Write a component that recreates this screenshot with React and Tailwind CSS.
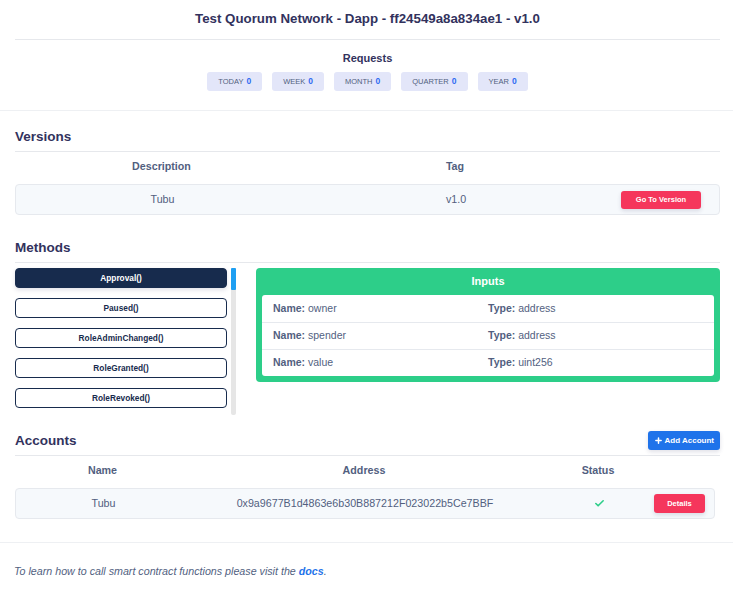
import { Check, Plus } from 'lucide-react';

const badges = ['Today', 'Week', 'Month', 'Quarter', 'Year'];
const methods = ['Approval()', 'Paused()', 'RoleAdminChanged()', 'RoleGranted()', 'RoleRevoked()'];
const inputs = [
  { name: 'owner', type: 'address' },
  { name: 'spender', type: 'address' },
  { name: 'value', type: 'uint256' },
];

function SectionTitle({ children, right }) {
  return (
    <div className="flex items-end justify-between border-b border-[#e6e8ec] pb-[5px]">
      <h2 className="text-[13.5px] font-semibold leading-[18px] text-[#32325d]">{children}</h2>
      {right}
    </div>
  );
}

export default function App() {
  return (
    <div className="min-h-[590px] w-[733px] bg-white font-['Liberation_Sans',Arial,sans-serif] text-[#525f7f]">
      {/* header */}
      <div className="pl-[15px] pr-[13px] pt-[10px]">
        <h1 className="text-center text-[13.3px] font-bold leading-[17px] text-[#32325d]">
          Test Quorum Network - Dapp - ff24549a8a834ae1 - v1.0
        </h1>
        <div className="mt-[12px] border-t border-[#e6e8ec]" />
        <div className="pt-[11px] pb-[19px] text-center">
          <div className="text-[11px] font-bold leading-[14px] text-[#32325d]">Requests</div>
          <div className="mt-[7px] flex justify-center gap-[10px]">
            {badges.map((b) => (
              <span key={b} className="flex h-[19px] items-center rounded-[3px] bg-[#e3e6f9] px-[11px] text-[7.5px] uppercase text-[#525f7f]">
                {b}
                <span className="ml-[3px] text-[8.5px] font-bold text-[#2f6bf2]">0</span>
              </span>
            ))}
          </div>
        </div>
      </div>
      <div className="border-t border-[#eef0f3]" />

      <div className="pl-[15px] pr-[13px]">
        {/* versions */}
        <div className="pt-[17px]">
          <SectionTitle>Versions</SectionTitle>
          <div className="grid grid-cols-[293px_294px_1fr] pt-[8px] text-center text-[10.7px] font-semibold leading-[13px] text-[#525f7f]">
            <div>Description</div>
            <div>Tag</div>
            <div />
          </div>
          <div className="mt-[11px] grid h-[31px] grid-cols-[293px_294px_1fr] items-center rounded-[4px] border border-[#e6e9ee] bg-[#f6f9fc] text-center text-[10.7px] text-[#525f7f]">
            <div>Tubu</div>
            <div>v1.0</div>
            <div className="flex justify-center">
              <button className="h-[18px] w-[80px] rounded-[3px] bg-[#f5365c] text-[7.5px] font-bold text-white shadow-[0_2px_4px_rgba(50,50,93,0.15)]">
                Go To Version
              </button>
            </div>
          </div>
        </div>

        {/* methods */}
        <div className="pt-[24px]">
          <SectionTitle>Methods</SectionTitle>
          <div className="mt-[5px] flex gap-[20px]">
            <div className="flex h-[147px] w-[221px] gap-[4px]">
              <div className="flex w-[212px] flex-col gap-[10px]">
                {methods.map((m, i) => (
                  <button
                    key={m}
                    className={
                      i === 0
                        ? 'h-[20px] rounded-[4px] border border-[#172b4d] bg-[#172b4d] text-[8.3px] font-bold text-white shadow-[0_2px_4px_rgba(50,50,93,0.15)]'
                        : 'h-[20px] rounded-[4px] border border-[#172b4d] bg-white text-[8.3px] font-bold text-[#172b4d]'
                    }
                  >
                    {m}
                  </button>
                ))}
              </div>
              <div className="w-[5px] rounded-[2px] bg-[#e6e6e6]">
                <div className="h-[22px] rounded-[1px] bg-[#1e9ff2]" />
              </div>
            </div>
            <div className="h-[114px] flex-1 rounded-[4px] bg-[#2dce89] px-[6px] pb-[5px]">
              <div className="py-[7px] text-center text-[11px] font-bold leading-[13px] text-white">Inputs</div>
              <div className="rounded-[3px] bg-white text-[10.5px] text-[#525f7f]">
                {inputs.map((r, i) => (
                  <div
                    key={r.name}
                    className={'grid h-[27px] grid-cols-2 items-center px-[11px] ' + (i > 0 ? 'border-t border-[#e6e9ee]' : '')}
                  >
                    <div>
                      <span className="font-bold">Name:</span> {r.name}
                    </div>
                    <div>
                      <span className="font-bold">Type:</span> {r.type}
                    </div>
                  </div>
                ))}
              </div>
            </div>
          </div>
        </div>

        {/* accounts */}
        <div className="pt-[16px]">
          <SectionTitle
            right={
              <button className="flex h-[19px] items-center gap-[2px] rounded-[3px] bg-[#1f73ea] px-[6px] text-[8px] font-bold text-white shadow-[0_2px_4px_rgba(50,50,93,0.15)]">
                <Plus size={9} strokeWidth={4} />
                Add Account
              </button>
            }
          >
            Accounts
          </SectionTitle>
          <div className="grid w-[700px] grid-cols-[175px_348px_120px_minmax(0,1fr)] pt-[8px] text-center text-[10.7px] font-semibold leading-[13px] text-[#525f7f]">
            <div>Name</div>
            <div>Address</div>
            <div>Status</div>
            <div />
          </div>
          <div className="mt-[11px] grid h-[31px] w-[700px] grid-cols-[175px_348px_120px_minmax(0,1fr)] items-center rounded-[4px] border border-[#e6e9ee] bg-[#f6f9fc] text-center text-[10.7px] text-[#525f7f]">
            <div>Tubu</div>
            <div>0x9a9677B1d4863e6b30B887212F023022b5Ce7BBF</div>
            <div className="flex justify-center">
              <Check size={11} strokeWidth={3.5} className="text-[#2dce89]" />
            </div>
            <div className="flex justify-end pr-[9px]">
              <button className="h-[19px] w-[51px] shrink-0 rounded-[3px] bg-[#f5365c] text-[7.5px] font-bold text-white shadow-[0_2px_4px_rgba(50,50,93,0.15)]">
                Details
              </button>
            </div>
          </div>
        </div>
      </div>

      <div className="mt-[23px] border-t border-[#eef0f3]" />
      <p className="px-[14px] pt-[20px] text-[10.7px] italic text-[#525f7f]">
        To learn how to call smart contract functions please visit the{' '}
        <span className="font-bold text-[#1f73ea]">docs</span>.
      </p>
    </div>
  );
}
